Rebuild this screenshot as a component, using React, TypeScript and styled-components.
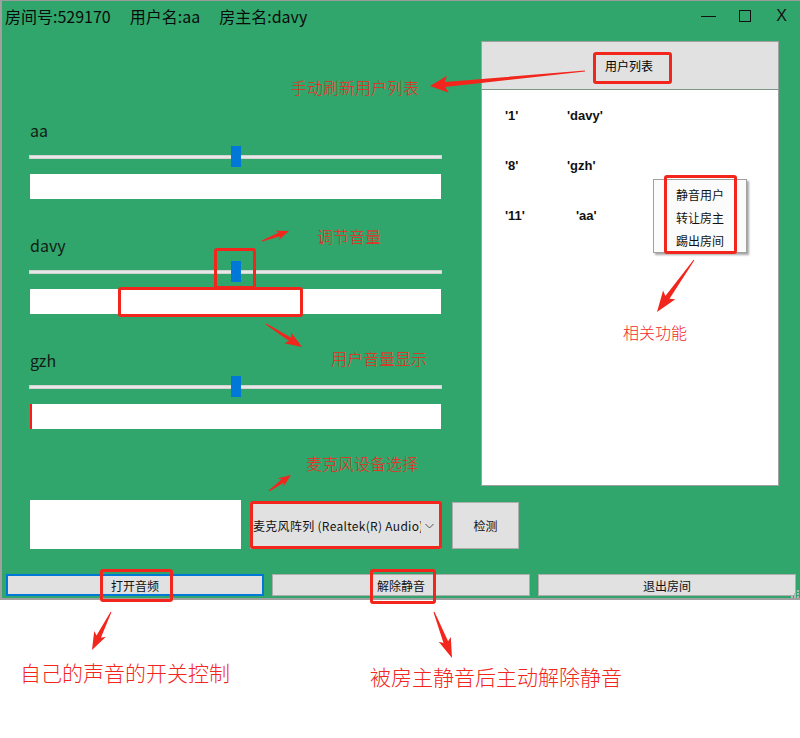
import React from 'react';
import styled, {createGlobalStyle} from 'styled-components';

const GlobalStyle = createGlobalStyle`
  html, body {
    margin: 0;
    padding: 0;
    background: #fff;
  }
  body {
    font-family: "Noto Sans CJK SC", "Noto Sans", sans-serif;
    color: #000;
  }
`;

const ui = `"Noto Sans CJK SC", "Noto Sans", sans-serif`;
const red = '#F2261C';

const Page = styled.div`
  position: relative;
  width: 800px;
  height: 738px;
  overflow: hidden;
  background: #fff;
`;

const Window = styled.div`
  position: relative;
  box-sizing: border-box;
  width: 800px;
  height: 600px;
  background: #31A66C;
  border-top: 1px solid #9c9c9c;
  border-left: 2px solid #a0a0a0;
  border-bottom: 2px solid #a0a0a0;
  display: flex;
  flex-direction: column;
`;

const TitleBar = styled.div`
  height: 40px;
  display: flex;
  align-items: flex-start;
  padding: 4px 13px 0 3px;
  box-sizing: border-box;
`;

const TitleInfo = styled.div`
  display: flex;
  gap: 19px;
  font-size: 16px;
  line-height: 22px;
  color: #0b0b0b;
`;

const Controls = styled.div`
  margin-left: auto;
  height: 22px;
  display: flex;
  align-items: center;
`;

const MinIcon = styled.span`
  width: 15px;
  height: 1px;
  background: #111;
`;

const MaxIcon = styled.span`
  width: 10px;
  height: 10px;
  border: 1px solid #111;
  margin-left: 23px;
`;

const CloseIcon = styled.span`
  margin-left: 25px;
  font-family: "Liberation Sans", sans-serif;
  font-size: 16px;
  color: #111;
`;

const Upper = styled.div`
  display: flex;
  padding-left: 28px;
  height: 445px;
`;

const LeftColumn = styled.div`
  width: 411px;
  padding-top: 79px;
`;

const Channel = styled.div`
  margin-bottom: 36px;
`;

const ChannelName = styled.div`
  font-size: 16px;
  line-height: 21px;
  color: #101c14;
`;

const Slider = styled.div`
  position: relative;
  height: 21px;
  margin-top: 5px;
  display: flex;
  align-items: center;
`;

const Track = styled.div`
  width: 100%;
  height: 2px;
  background: #e7e7e7;
  border: 1px solid #d2d2d2;
  box-sizing: content-box;
  margin: 0 -1px;
`;

const Thumb = styled.div`
  position: absolute;
  top: 0;
  width: 10px;
  height: 21px;
  background: #0078D7;
`;

const Meter = styled.div`
  height: 25px;
  margin-top: 7px;
  background: #fff;
  display: flex;
`;

const MeterFill = styled.div`
  height: 100%;
  background: #ff1a1a;
`;

const RightPanel = styled.div`
  margin-left: 40px;
  width: 298px;
  display: flex;
  flex-direction: column;
`;

const PanelHeader = styled.div`
  height: 48px;
  box-sizing: border-box;
  background: #e1e1e1;
  border: 1px solid #a0a0a0;
  border-bottom: none;
  display: flex;
  align-items: center;
  justify-content: center;
  font-size: 12px;
  padding-right: 2px;
`;

const UserList = styled.div`
  flex: 1;
  background: #fff;
  border: 1px solid #a0a0a0;
  border-top-color: #7d9586;
  padding: 16px 0 0 23px;
  display: flex;
  flex-direction: column;
  gap: 30px;
`;

const UserRow = styled.div`
  display: flex;
  height: 20px;
  line-height: 20px;
  font-family: "Liberation Sans", Arial, sans-serif;
  font-weight: bold;
  font-size: 13px;
  color: #111;
`;

const UserId = styled.span`
  width: 62px;
`;

const UserName = styled.span<{$indent: number}>`
  margin-left: ${p => p.$indent}px;
`;

const DeviceRow = styled.div`
  display: flex;
  align-items: flex-end;
  margin-top: 14px;
  padding-left: 28px;
  height: 49px;
`;

const MicPreview = styled.div`
  width: 211px;
  height: 49px;
  background: #fff;
`;

const Combo = styled.div`
  box-sizing: border-box;
  margin-left: 9px;
  width: 191px;
  height: 47px;
  background: #e1e1e1;
  border: 1px solid #adadad;
  display: flex;
  align-items: center;
  padding: 0 6px 0 2px;
  font-size: 12px;
`;

const ComboText = styled.span`
  flex: 1;
  margin-right: 4px;
  white-space: nowrap;
  overflow: hidden;
  letter-spacing: 0.3px;
  color: #111;
`;

const GrayButton = styled.button<{$focused?: boolean}>`
  box-sizing: border-box;
  background: #e1e1e1;
  border: ${p => (p.$focused ? '2px solid #0078D7' : '1px solid #adadad')};
  font-family: ${ui};
  font-size: 12px;
  color: #111;
  padding: 0;
  margin: 0;
`;

const CheckButton = styled(GrayButton)`
  margin-left: 11px;
  width: 67px;
  height: 47px;
`;

const ButtonRow = styled.div`
  display: flex;
  gap: 8px;
  margin-top: 25px;
  padding-left: 4px;
  height: 22px;
`;

const BarButton = styled(GrayButton)`
  width: 258px;
  height: 22px;
`;

const Grip = styled.svg`
  position: absolute;
  right: 1px;
  bottom: 0;
`;

const ContextMenu = styled.div`
  position: absolute;
  left: 653px;
  top: 179px;
  width: 94px;
  height: 74px;
  box-sizing: border-box;
  background: #fbfbfb;
  border: 1px solid #a0a0a0;
  box-shadow: 2px 2px 2px rgba(0, 0, 0, 0.35);
  padding: 3px 0 0 22px;
  font-size: 12px;
`;

const MenuItem = styled.div`
  height: 23px;
  line-height: 23px;
  color: #111;
`;

const Overlay = styled.svg`
  position: absolute;
  left: 0;
  top: 0;
  pointer-events: none;
`;

const Mark = styled.div`
  position: absolute;
  box-sizing: border-box;
  border: 3px solid ${red};
  border-radius: 3px;
`;

const Note = styled.div<{$big?: boolean}>`
  position: absolute;
  white-space: nowrap;
  color: ${red};
  font-family: ${ui};
  font-weight: 300;
  font-size: ${p => (p.$big ? 21 : 16)}px;
  line-height: ${p => (p.$big ? 21 : 16)}px;
`;

const channels = [
  {name: 'aa', value: 0.5, level: 0},
  {name: 'davy', value: 0.5, level: 0},
  {name: 'gzh', value: 0.5, level: 2},
];

const users = [
  {id: "'1'", name: "'davy'", indent: 0},
  {id: "'8'", name: "'gzh'", indent: 0},
  {id: "'11'", name: "'aa'", indent: 9},
];

const marks = [
  {x: 593, y: 52, w: 79, h: 32},
  {x: 214, y: 248, w: 42, h: 41},
  {x: 118, y: 287, w: 185, h: 30},
  {x: 664, y: 175, w: 73, h: 79},
  {x: 250, y: 501, w: 192, h: 48},
  {x: 100, y: 569, w: 73, h: 33},
  {x: 370, y: 569, w: 66, h: 35},
];

const notes = [
  {text: '手动刷新用户列表', x: 291, y: 79},
  {text: '调节音量', x: 317, y: 228},
  {text: '用户音量显示', x: 331, y: 350},
  {text: '麦克风设备选择', x: 306, y: 455},
  {text: '相关功能', x: 623, y: 324},
  {text: '自己的声音的开关控制', x: 20, y: 662, big: true},
  {text: '被房主静音后主动解除静音', x: 370, y: 666, big: true},
];

// tail -> tip, tapered shaft with a swept head
const arrows = [
  [585, 71, 430, 86, 5, 15, 17],
  [262, 241, 289, 231, 4, 10, 10],
  [266, 324, 302, 347, 4, 14, 13],
  [269, 491, 291, 475, 4, 10, 10],
  [694, 260, 657, 312, 5, 18, 15],
  [111, 612, 92, 650, 5, 15, 13],
  [434, 612, 452, 658, 5, 17, 13],
];

function arrowPoints([x1, y1, x2, y2, shaft, headL, headW]: number[]) {
  const len = Math.hypot(x2 - x1, y2 - y1);
  const ux = (x2 - x1) / len;
  const uy = (y2 - y1) / len;
  const nx = -uy;
  const ny = ux;
  const bx = x2 - ux * headL;
  const by = y2 - uy * headL;
  const wx = bx - ux * 3;
  const wy = by - uy * 3;
  const pts = [
    [x1 + nx * 0.5, y1 + ny * 0.5],
    [bx + (nx * shaft) / 2, by + (ny * shaft) / 2],
    [wx + (nx * headW) / 2, wy + (ny * headW) / 2],
    [x2, y2],
    [wx - (nx * headW) / 2, wy - (ny * headW) / 2],
    [bx - (nx * shaft) / 2, by - (ny * shaft) / 2],
    [x1 - nx * 0.5, y1 - ny * 0.5],
  ];
  return pts.map(p => p.map(v => v.toFixed(1)).join(',')).join(' ');
}

function ChannelControl({name, value, level}) {
  return (
    <Channel>
      <ChannelName>{name}</ChannelName>
      <Slider>
        <Track />
        <Thumb style={{left: `${(411 - 10) * value}px`}} />
      </Slider>
      <Meter>
        <MeterFill style={{width: `${level}px`}} />
      </Meter>
    </Channel>
  );
}

function App() {
  return (
    <Page>
      <GlobalStyle />
      <Window>
        <TitleBar>
          <TitleInfo>
            <span>房间号:529170</span>
            <span>用户名:aa</span>
            <span>房主名:davy</span>
          </TitleInfo>
          <Controls>
            <MinIcon />
            <MaxIcon />
            <CloseIcon>X</CloseIcon>
          </Controls>
        </TitleBar>

        <Upper>
          <LeftColumn>
            {channels.map(channel => (
              <ChannelControl key={channel.name} {...channel} />
            ))}
          </LeftColumn>

          <RightPanel>
            <PanelHeader>用户列表</PanelHeader>
            <UserList>
              {users.map(user => (
                <UserRow key={user.id}>
                  <UserId>{user.id}</UserId>
                  <UserName $indent={user.indent}>{user.name}</UserName>
                </UserRow>
              ))}
            </UserList>
          </RightPanel>
        </Upper>

        <DeviceRow>
          <MicPreview />
          <Combo>
            <ComboText>麦克风阵列 (Realtek(R) Audio)</ComboText>
            <svg width="9" height="6" viewBox="0 0 9 6">
              <polyline points="0.5,1 4.5,5 8.5,1" fill="none" stroke="#555" strokeWidth="1" />
            </svg>
          </Combo>
          <CheckButton>检测</CheckButton>
        </DeviceRow>

        <ButtonRow>
          <BarButton $focused>打开音频</BarButton>
          <BarButton>解除静音</BarButton>
          <BarButton>退出房间</BarButton>
        </ButtonRow>

        <Grip width="8" height="8" viewBox="0 0 8 8">
          {[[6, 0], [6, 3], [3, 3], [6, 6], [3, 6], [0, 6]].map(([x, y]) => (
            <rect key={`${x}-${y}`} x={x} y={y} width="2" height="2" fill="#b8b8b8" />
          ))}
        </Grip>
      </Window>

      <ContextMenu>
        <MenuItem>静音用户</MenuItem>
        <MenuItem>转让房主</MenuItem>
        <MenuItem>踢出房间</MenuItem>
      </ContextMenu>

      {marks.map(m => (
        <Mark key={`${m.x}-${m.y}`} style={{left: m.x, top: m.y, width: m.w, height: m.h}} />
      ))}

      {notes.map(n => (
        <Note key={n.text} $big={n.big} style={{left: n.x, top: n.y}}>
          {n.text}
        </Note>
      ))}

      <Overlay width="800" height="738" viewBox="0 0 800 738">
        {arrows.map((a, i) => (
          <polygon key={i} points={arrowPoints(a)} fill={red} />
        ))}
      </Overlay>
    </Page>
  );
}

export default App;
